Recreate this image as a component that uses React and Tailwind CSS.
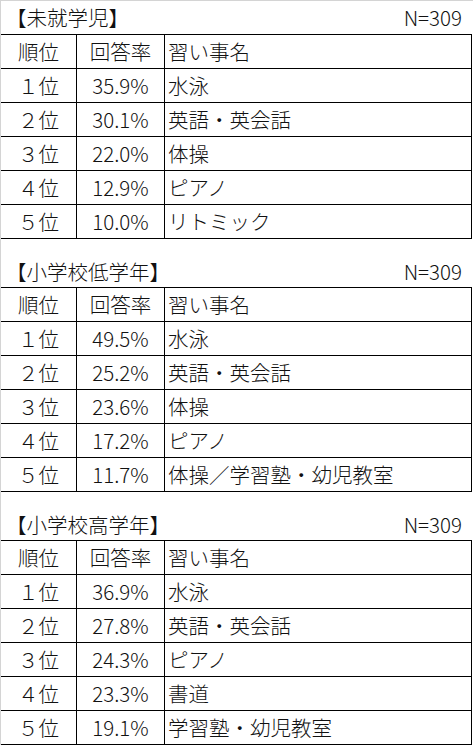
import React from "react";

const tables = [
  {
    title: "【未就学児】",
    rows: [
      ["１位", "35.9%", "水泳"],
      ["２位", "30.1%", "英語・英会話"],
      ["３位", "22.0%", "体操"],
      ["４位", "12.9%", "ピアノ"],
      ["５位", "10.0%", "リトミック"],
    ],
  },
  {
    title: "【小学校低学年】",
    rows: [
      ["１位", "49.5%", "水泳"],
      ["２位", "25.2%", "英語・英会話"],
      ["３位", "23.6%", "体操"],
      ["４位", "17.2%", "ピアノ"],
      ["５位", "11.7%", "体操／学習塾・幼児教室"],
    ],
  },
  {
    title: "【小学校高学年】",
    rows: [
      ["１位", "36.9%", "水泳"],
      ["２位", "27.8%", "英語・英会話"],
      ["３位", "24.3%", "ピアノ"],
      ["４位", "23.3%", "書道"],
      ["５位", "19.1%", "学習塾・幼児教室"],
    ],
  },
];

function Row({ a, b, c }) {
  return (
    <div className="grid grid-cols-[76px_88px_307px] h-[34px] border-b border-black">
      <div className="flex items-center justify-center border-r border-black">{a}</div>
      <div className="flex items-center justify-center border-r border-black">{b}</div>
      <div className="flex items-center pl-[3px] border-r border-black">{c}</div>
    </div>
  );
}

function Block({ t, first }) {
  return (
    <div className="flex flex-col">
      {!first && <div className="h-[16px]" />}
      <div className={`flex items-center justify-between w-[471px] pl-[5px] pr-[10px] ${first ? "h-[33px]" : "h-[32px]"}`}>
        <span>{t.title}</span>
        <span>N=309</span>
      </div>
      <div className="w-[471px] border-t border-black">
        <Row a="順位" b="回答率" c="習い事名" />
        {t.rows.map((r, i) => (
          <Row key={i} a={r[0]} b={r[1]} c={r[2]} />
        ))}
      </div>
    </div>
  );
}

export default function App() {
  return (
    <div
      className="w-[473px] h-[745px] bg-white border-l border-t border-[#d4d4d4] overflow-hidden text-[20.5px] leading-none font-light text-[#111]"
      style={{ fontFamily: '"Noto Sans CJK JP", "Noto Sans", sans-serif' }}
    >
      {tables.map((t, i) => (
        <Block key={i} t={t} first={i === 0} />
      ))}
    </div>
  );
}
